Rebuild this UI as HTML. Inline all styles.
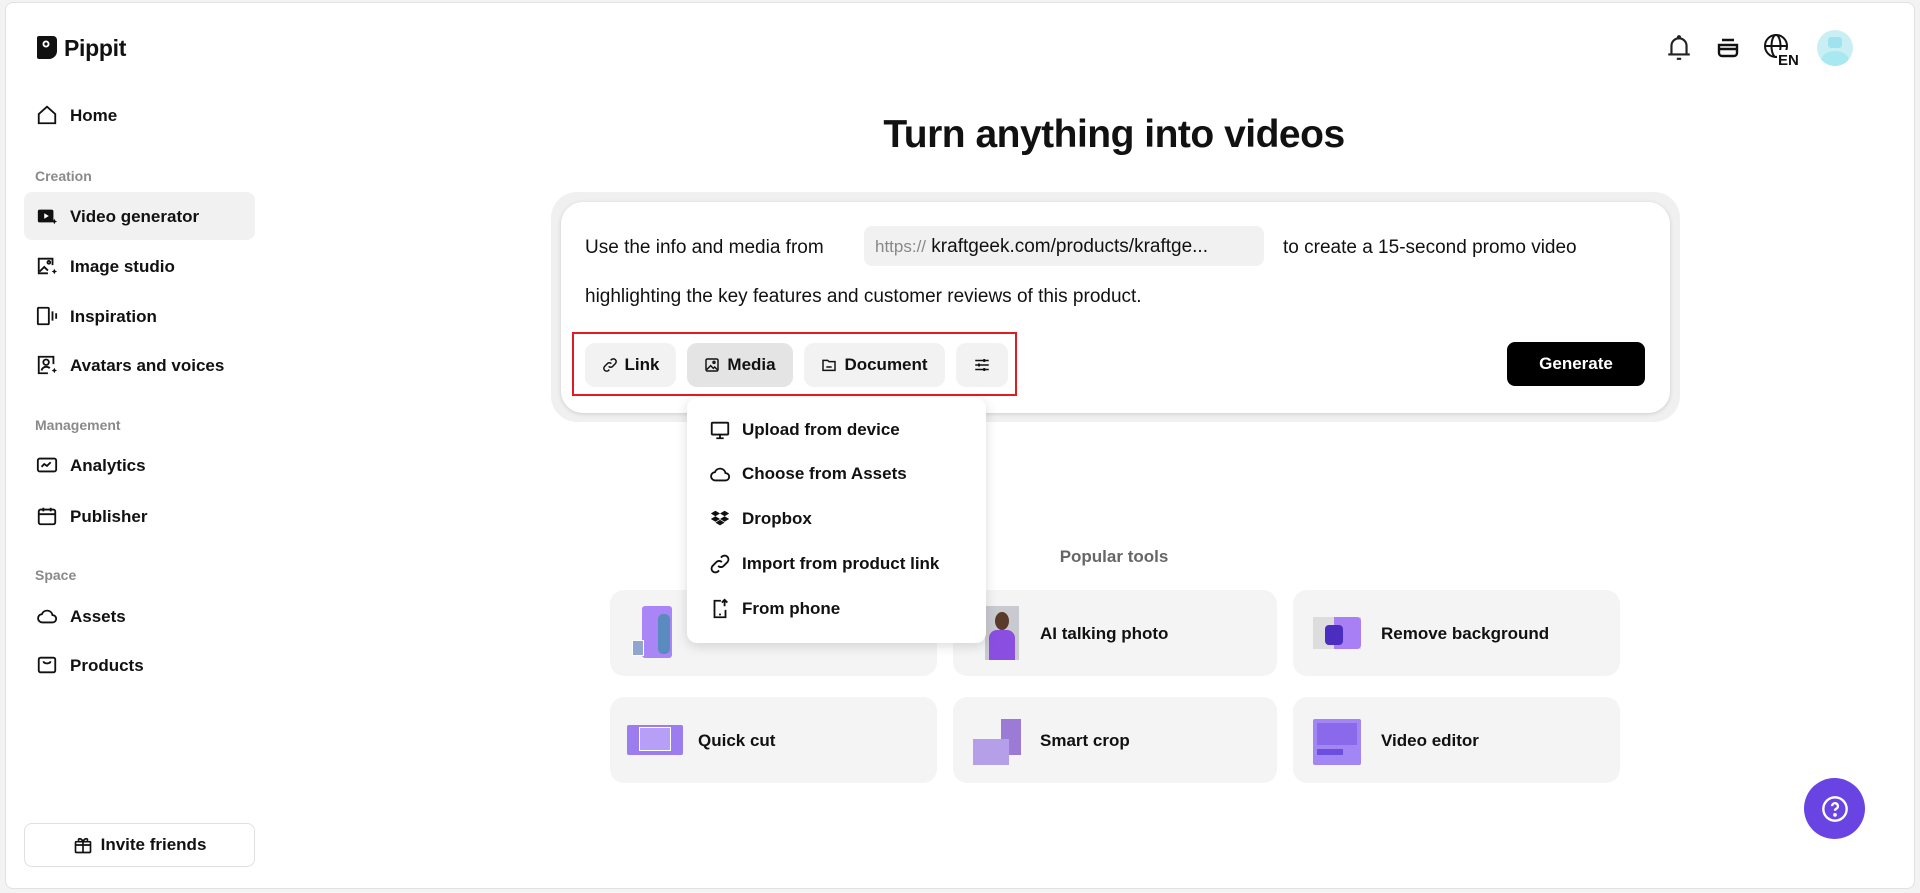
<!DOCTYPE html>
<html><head><meta charset="utf-8"><style>
*{box-sizing:border-box;margin:0;padding:0}
body{width:1920px;height:893px;background:#f3f3f3;font-family:"Liberation Sans",Arial,sans-serif;color:#111;position:relative;overflow:hidden}
.frame{position:absolute;left:5px;top:2px;width:1910px;height:887px;background:#fff;border:1px solid #e2e2e2;border-radius:8px}
.abs{position:absolute}
.nav{position:absolute;left:24px;width:231px;height:48px;display:flex;align-items:center;font-size:17px;font-weight:700;color:#111}
.nav svg{position:absolute;left:12px}
.nav span{position:absolute;left:46px;margin-top:2px}
.sec{position:absolute;left:35px;font-size:14px;color:#8a8a8a;font-weight:700}
.btn{position:absolute;top:343px;height:44px;background:#f2f2f2;border-radius:10px;display:flex;align-items:center;justify-content:center;gap:7px;font-size:17px;font-weight:700}
.dd{position:absolute;left:742px;font-size:17px;font-weight:700}
.ddi{position:absolute;left:709px}
.card{position:absolute;height:86px;background:#f4f4f4;border-radius:14px}
.card .t{position:absolute;top:34px;font-size:17px;font-weight:700}
.card .th{position:absolute;top:18px;width:50px;height:50px}
</style></head><body>
<div class="frame"></div>

<svg class="abs" style="left:36px;top:35px" width="22" height="25" viewBox="0 0 22 25"><path d="M3 1h14a4 4 0 0 1 4 4v11a8 8 0 0 1-8 8H3a2 2 0 0 1-2-2V3a2 2 0 0 1 2-2z" fill="#111"/><circle cx="10" cy="9" r="3.5" fill="#fff"/><circle cx="10" cy="9" r="1.6" fill="#111"/></svg>
<div class="abs" style="left:64px;top:35px;font-size:23px;font-weight:700;letter-spacing:-0.3px">Pippit</div>

<div class="nav" style="top:91px"><svg width="22" height="22" viewBox="0 0 24 24" fill="none" stroke="#111" stroke-width="2"><path d="M3 11l9-8 9 8v10H3z"/></svg><span>Home</span></div>
<div class="sec" style="top:168px">Creation</div>
<div class="nav" style="top:192px;background:#f1f1f1;border-radius:8px"><svg width="22" height="22" viewBox="0 0 24 24"><rect x="2" y="5" width="17" height="14" rx="2" fill="#111"/><path d="M9 9l5 3-5 3z" fill="#fff"/><path d="M20 15l1 2 2 1-2 1-1 2-1-2-2-1 2-1z" fill="#111"/></svg><span>Video generator</span></div>
<div class="nav" style="top:242px"><svg width="22" height="22" viewBox="0 0 24 24" fill="none" stroke="#111" stroke-width="2"><path d="M18 11V4H3v16h10"/><path d="M4 18l5-5 4 4"/><circle cx="14" cy="8" r="1.5"/><path d="M20 15l1 2 2 1-2 1-1 2-1-2-2-1 2-1z" fill="#111" stroke="none"/></svg><span>Image studio</span></div>
<div class="nav" style="top:292px"><svg width="22" height="22" viewBox="0 0 24 24" fill="none" stroke="#111" stroke-width="2"><rect x="2" y="3" width="12" height="18" rx="1"/><path d="M18 7v10M22 9v6"/></svg><span>Inspiration</span></div>
<div class="nav" style="top:341px"><svg width="22" height="22" viewBox="0 0 24 24" fill="none" stroke="#111" stroke-width="2"><path d="M19 11V3H3v18h10"/><circle cx="11" cy="9" r="3"/><path d="M6 18c1-3 3-4 5-4s3 .5 4 1.5"/><path d="M20 15l1 2 2 1-2 1-1 2-1-2-2-1 2-1z" fill="#111" stroke="none"/></svg><span>Avatars and voices</span></div>
<div class="sec" style="top:417px">Management</div>
<div class="nav" style="top:441px"><svg width="22" height="22" viewBox="0 0 24 24" fill="none" stroke="#111" stroke-width="2"><rect x="2" y="5" width="20" height="14" rx="2"/><path d="M6 14l3-3 3 2 4-4"/></svg><span>Analytics</span></div>
<div class="nav" style="top:492px"><svg width="22" height="22" viewBox="0 0 24 24" fill="none" stroke="#111" stroke-width="2"><rect x="3" y="5" width="18" height="16" rx="2"/><path d="M3 10h18M8 3v4M16 3v4"/></svg><span>Publisher</span></div>
<div class="sec" style="top:567px">Space</div>
<div class="nav" style="top:592px"><svg width="22" height="22" viewBox="0 0 24 24" fill="none" stroke="#111" stroke-width="2"><path d="M7 19h11a4 4 0 0 0 0-8 6 6 0 0 0-11.5-1A4.5 4.5 0 0 0 7 19z"/></svg><span>Assets</span></div>
<div class="nav" style="top:641px"><svg width="22" height="22" viewBox="0 0 24 24" fill="none" stroke="#111" stroke-width="2"><rect x="3" y="4" width="18" height="16" rx="2"/><path d="M8 8c1 3 7 3 8 0"/></svg><span>Products</span></div>

<div class="abs" style="left:24px;top:823px;width:231px;height:44px;border:1px solid #e0e0e0;border-radius:8px;display:flex;align-items:center;justify-content:center;gap:8px;font-size:17px;font-weight:700"><svg width="20" height="20" viewBox="0 0 24 24" fill="none" stroke="#111" stroke-width="2"><rect x="3" y="8" width="18" height="13" rx="1"/><path d="M3 12h18M12 8v13M12 8c-2-5-7-4-5-1M12 8c2-5 7-4 5-1"/></svg>Invite friends</div>

<svg class="abs" style="left:1666px;top:34px" width="26" height="28" viewBox="0 0 24 26" fill="none" stroke="#222" stroke-width="2"><path d="M5 19V11a7 7 0 0 1 14 0v8M2 19h20M10 23h4"/><circle cx="12" cy="3" r="1" fill="#222"/></svg>
<svg class="abs" style="left:1716px;top:36px" width="24" height="24" viewBox="0 0 24 24" fill="none" stroke="#111" stroke-width="2.4"><path d="M6 4h12M3 9h18v8a3 3 0 0 1-3 3H6a3 3 0 0 1-3-3z M3 13h18"/></svg>
<svg class="abs" style="left:1763px;top:32px" width="40" height="36" viewBox="0 0 40 36"><g fill="none" stroke="#111" stroke-width="2"><circle cx="13" cy="14" r="11"/><ellipse cx="13" cy="14" rx="4.5" ry="11"/><path d="M2 14h22"/></g><rect x="14" y="18" width="26" height="18" fill="#fff"/><text x="15" y="33" font-family="Liberation Sans" font-weight="700" font-size="15" fill="#111">EN</text></svg>
<div class="abs" style="left:1817px;top:30px;width:36px;height:36px;border-radius:50%;background:#c9eff4;overflow:hidden"><div style="position:absolute;left:11px;top:7px;width:14px;height:11px;background:#9ee3ed;border-radius:3px"></div><div style="position:absolute;left:4px;top:21px;width:28px;height:20px;background:#a8e8f0;border-radius:50%"></div></div>

<div class="abs" style="left:0;width:2228px;top:113px;text-align:center;font-size:39px;font-weight:700;letter-spacing:-0.5px">Turn anything into videos</div>

<div class="abs" style="left:551px;top:192px;width:1129px;height:230px;background:#f0f0f0;border-radius:26px"></div>
<div class="abs" style="left:561px;top:202px;width:1109px;height:211px;background:#fff;border-radius:22px;box-shadow:0 1px 4px rgba(0,0,0,.15)"></div>
<div class="abs" style="left:585px;top:237px;font-size:19px">Use the info and media from</div>
<div class="abs" style="left:864px;top:226px;width:400px;height:40px;background:#f1f1f1;border-radius:8px;font-size:19px;line-height:42px;padding-left:11px;white-space:nowrap"><span style="color:#888;font-size:17px">https://</span> kraftgeek.com/products/kraftge...</div>
<div class="abs" style="left:1283px;top:237px;font-size:19px">to create a 15-second promo video</div>
<div class="abs" style="left:585px;top:286px;font-size:19px">highlighting the key features and customer reviews of this product.</div>

<div class="abs" style="left:572px;top:332px;width:445px;height:64px;border:2px solid #e21b23"></div>
<div class="btn" style="left:585px;width:91px"><svg width="16" height="16" viewBox="0 0 24 24" fill="none" stroke="#111" stroke-width="2.2"><path d="M10 14a4 4 0 0 0 6 0l4-4a4 4 0 0 0-6-6l-1 1M14 10a4 4 0 0 0-6 0l-4 4a4 4 0 0 0 6 6l1-1"/></svg>Link</div>
<div class="btn" style="left:687px;width:106px;background:#e4e4e4"><svg width="16" height="16" viewBox="0 0 24 24" fill="none" stroke="#111" stroke-width="2.2"><rect x="3" y="3" width="18" height="18" rx="2"/><path d="M4 19l6-6 4 4 2-2 4 4"/><circle cx="15" cy="8" r="1.5"/></svg>Media</div>
<div class="btn" style="left:804px;width:141px"><svg width="16" height="16" viewBox="0 0 24 24" fill="none" stroke="#111" stroke-width="2.2"><path d="M3 5h7l2 2h9v13H3z M8 15h8"/></svg>Document</div>
<div class="btn" style="left:956px;width:52px"><svg width="18" height="18" viewBox="0 0 24 24" fill="none" stroke="#111" stroke-width="2"><path d="M3 6h18M3 12h18M3 18h18"/><path d="M15 4v4M8 10v4M15 16v4" stroke-width="2.6"/></svg></div>
<div class="abs" style="left:1507px;top:342px;width:138px;height:44px;background:#000;color:#fff;border-radius:8px;font-size:17px;font-weight:700;display:flex;align-items:center;justify-content:center">Generate</div>

<div class="abs" style="left:0;width:2228px;top:547px;text-align:center;font-size:17px;font-weight:700;color:#666">Popular tools</div>
<div class="card" style="left:610px;top:590px;width:327px"><div class="th" style="left:20px;top:16px"><div style="position:absolute;left:12px;top:0;width:30px;height:52px;background:#a985f5;border-radius:3px"></div><div style="position:absolute;left:28px;top:8px;width:12px;height:40px;background:#5a8bbf;border-radius:5px"></div><div style="position:absolute;left:2px;top:34px;width:12px;height:16px;background:#8fa6d0;border:1px solid #fff"></div></div></div>
<div class="card" style="left:953px;top:590px;width:324px"><div class="th" style="left:32px;top:16px;width:34px;height:54px;background:#c9c9d0"><div style="position:absolute;left:4px;top:24px;width:26px;height:30px;background:#8a4fe0;border-radius:8px 8px 0 0"></div><div style="position:absolute;left:10px;top:6px;width:14px;height:18px;background:#5a3a2a;border-radius:50%"></div></div><div class="t" style="left:87px">AI talking photo</div></div>
<div class="card" style="left:1293px;top:590px;width:327px"><div class="th" style="left:20px;top:27px;width:48px;height:32px;background:#ddd"><div style="position:absolute;left:21px;top:0;width:27px;height:32px;background:#a97ff5;border-radius:0 4px 4px 0"></div><div style="position:absolute;left:12px;top:8px;width:18px;height:20px;background:#4b2ec0;border-radius:4px"></div></div><div class="t" style="left:88px">Remove background</div></div>
<div class="card" style="left:610px;top:697px;width:327px"><div class="th" style="left:17px;top:28px;width:56px;height:30px;background:#9b7df0;border-radius:2px"><div style="position:absolute;left:12px;top:2px;width:32px;height:24px;background:#b79ef7;border:1px solid #fff"></div></div><div class="t" style="left:88px">Quick cut</div></div>
<div class="card" style="left:953px;top:697px;width:324px"><div class="th" style="left:20px;top:22px;width:52px;height:46px"><div style="position:absolute;left:28px;top:0;width:20px;height:36px;background:#9c7bd6"></div><div style="position:absolute;left:0;top:20px;width:36px;height:26px;background:#b59fe8"></div></div><div class="t" style="left:87px">Smart crop</div></div>
<div class="card" style="left:1293px;top:697px;width:327px"><div class="th" style="left:20px;top:22px;width:48px;height:46px;background:#a286f3;border-radius:2px"><div style="position:absolute;left:4px;top:4px;width:40px;height:22px;background:#8a6aea"></div><div style="position:absolute;left:4px;top:30px;width:26px;height:6px;background:#6c4fe0"></div></div><div class="t" style="left:88px">Video editor</div></div>

<div class="abs" style="left:687px;top:398px;width:299px;height:245px;background:#fff;border-radius:10px;box-shadow:0 3px 12px rgba(0,0,0,.14)"></div>
<svg class="ddi" style="top:419px" width="22" height="22" viewBox="0 0 24 24" fill="none" stroke="#111" stroke-width="2"><rect x="3" y="4" width="18" height="13" rx="1"/><path d="M12 17v4M8 21h8"/></svg>
<div class="dd" style="top:420px">Upload from device</div>
<svg class="ddi" style="top:463px" width="22" height="22" viewBox="0 0 24 24" fill="none" stroke="#111" stroke-width="2"><path d="M7 19h11a4 4 0 0 0 0-8 6 6 0 0 0-11.5-1A4.5 4.5 0 0 0 7 19z"/></svg>
<div class="dd" style="top:464px">Choose from Assets</div>
<svg class="ddi" style="top:508px" width="22" height="22" viewBox="0 0 24 24" fill="#111"><path d="M7 3l5 3-5 3-5-3zM17 3l5 3-5 3-5-3zM2 12l5-3 5 3-5 3zM12 12l5-3 5 3-5 3zM7 16l5-3 5 3-5 3z"/></svg>
<div class="dd" style="top:509px">Dropbox</div>
<svg class="ddi" style="top:553px" width="22" height="22" viewBox="0 0 24 24" fill="none" stroke="#111" stroke-width="2"><path d="M10 14a4 4 0 0 0 6 0l4-4a4 4 0 0 0-6-6l-1 1M14 10a4 4 0 0 0-6 0l-4 4a4 4 0 0 0 6 6l1-1"/></svg>
<div class="dd" style="top:554px">Import from product link</div>
<svg class="ddi" style="top:598px" width="22" height="22" viewBox="0 0 24 24" fill="none" stroke="#111" stroke-width="2"><path d="M13 3H6v18h12v-8M11 18h2M17 9V2M14 5l3-3 3 3"/></svg>
<div class="dd" style="top:599px">From phone</div>

<div class="abs" style="left:1804px;top:778px;width:61px;height:61px;border-radius:50%;background:#6a44e3;display:flex;align-items:center;justify-content:center"><svg width="28" height="28" viewBox="0 0 24 24" fill="none" stroke="#fff" stroke-width="2"><circle cx="12" cy="12" r="10"/><path d="M9.5 9.5a2.5 2.5 0 1 1 3.5 2.3c-.7.3-1 .9-1 1.7"/><circle cx="12" cy="17" r=".6" fill="#fff"/></svg></div>
</body></html>
